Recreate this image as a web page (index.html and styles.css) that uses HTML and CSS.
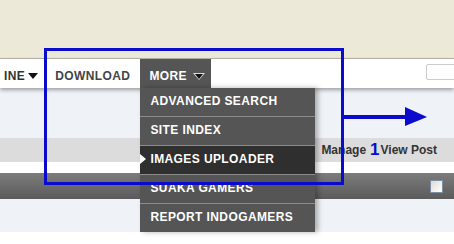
FILE: index.html
```html
<!DOCTYPE html>
<html lang="en">
<head>
    <meta charset="UTF-8">
    <title>More menu</title>
    <link rel="stylesheet" href="styles.css">
</head>
<body>

    <div id="page">
        <div id="topbar"></div>

        <div id="nav">
            <div class="tab first">INE <span class="caret"></span></div>
            <div class="tab">DOWNLOAD</div>
            <div class="tab open">
                MORE <span class="caret light"></span>
                <ul class="dropdown">
                    <li>ADVANCED SEARCH</li>
                    <li>SITE INDEX</li>
                    <li class="active">IMAGES UPLOADER</li>
                    <li>SUAKA GAMERS</li>
                    <li>REPORT INDOGAMERS</li>
                </ul>
            </div>
            <input class="search" type="text">
        </div>

        <div id="hero"></div>

        <div id="toolbar">
            <span>Manage</span><span class="step">1</span><span>View Post</span>
        </div>

        <div id="panelHead">
            <span class="check"></span>
        </div>
        <div id="panelBody"></div>

        <!-- annotation -->
        <div class="markBox"></div>
        <svg class="markArrow" width="90" height="24" viewBox="0 0 90 24">
            <rect x="0" y="8" width="66" height="4" fill="#0b0bcc"/>
            <polygon points="61,0 83,10 61,19" fill="#0b0bcc"/>
        </svg>
    </div>

</body>
</html>
```

FILE: styles.css
```css
* {
    box-sizing: border-box;
}

body {
    margin: 0;
    background-color: #ffffff;
    font-family: "Liberation Sans", Arial, sans-serif;
}

#page {
    position: relative;
    width: 454px;
    height: 244px;
    overflow: hidden;
}

/* TOP */
#topbar {
    height: 59px;
    background-color: #ece9d8;
    border-bottom: 1px solid #b9b7aa;
}

/* NAV */
#nav {
    position: relative;
    z-index: 2;
    display: flex;
    align-items: flex-start;
    height: 29px;
    background-color: #ffffff;
    box-shadow: 0 2px 4px rgba(0, 0, 0, 0.35);
}

.tab {
    position: relative;
    display: flex;
    align-items: center;
    height: 29px;
    padding: 10px 10px 5px 9px;
    line-height: 14px;
    font-size: 12px;
    font-weight: bold;
    letter-spacing: 0.4px;
    color: #444444;
    white-space: nowrap;
}

.tab.first {
    padding-left: 4px;
    padding-right: 8px;
    color: #333333;
}

.tab.open {
    background-color: #555555;
    color: #ffffff;
    padding-right: 6px;
}

.caret {
    display: inline-block;
    width: 0;
    height: 0;
    margin-left: 3px;
    border-left: 5px solid transparent;
    border-right: 5px solid transparent;
    border-top: 6px solid #111111;
}

.caret.light {
    margin-left: 6px;
    border-left-width: 6px;
    border-right-width: 6px;
    border-top: 7px solid #dddddd;
    position: relative;
}

.caret.light::after {
    content: "";
    position: absolute;
    left: -4px;
    top: -6px;
    border-left: 4px solid transparent;
    border-right: 4px solid transparent;
    border-top: 5px solid #111111;
}

.dropdown {
    position: absolute;
    top: 29px;
    left: 0;
    width: 175px;
    margin: 0;
    padding: 0;
    list-style: none;
    background-color: #555555;
    box-shadow: 3px 0 5px rgba(0, 0, 0, 0.3);
}

.dropdown li {
    position: relative;
    height: 29px;
    padding: 6px 10px 8px 10px;
    line-height: 14px;
    border-bottom: 1px solid #8c8c8c;
    color: #ffffff;
    letter-spacing: 0.4px;
}

.dropdown li:last-child {
    height: 28px;
    border-bottom: none;
}

.dropdown li.active {
    background-color: #2f2f2f;
}

.dropdown li.active::before {
    content: "";
    position: absolute;
    left: 0;
    top: 8px;
    border-top: 5px solid transparent;
    border-bottom: 5px solid transparent;
    border-left: 6px solid #ffffff;
}

.search {
    margin: 5px -14px 0 auto;
    width: 42px;
    height: 16px;
    border: 1px solid #cccccc;
    border-radius: 2px;
    background-color: #ffffff;
}

/* CONTENT */
#hero {
    height: 50px;
    background-color: #eff2f7;
}

#toolbar {
    display: flex;
    justify-content: flex-end;
    align-items: center;
    height: 24px;
    margin-bottom: 11px;
    padding-right: 17px;
    background-color: #dcdcdc;
    font-size: 12px;
    font-weight: bold;
    color: #333333;
}

#toolbar .step {
    margin: 0 1px 0 4px;
    font-size: 17px;
    color: #0b0bcc;
}

#panelHead {
    display: flex;
    justify-content: flex-end;
    align-items: center;
    height: 26px;
    padding-right: 11px;
    background: linear-gradient(#7c7c7c, #5b5b5b);
}

.check {
    display: inline-block;
    width: 13px;
    height: 13px;
    border: 1px solid #7d8ea3;
    background: linear-gradient(135deg, #dcdcd6, #ffffff);
}

#panelBody {
    height: 33px;
    background-color: #eff2f7;
}

/* ANNOTATION */
.markBox {
    position: absolute;
    z-index: 5;
    left: 44px;
    top: 48px;
    width: 300px;
    height: 137px;
    border: 3px solid #0b0bcc;
}

.markArrow {
    position: absolute;
    z-index: 5;
    left: 344px;
    top: 107px;
}
```
